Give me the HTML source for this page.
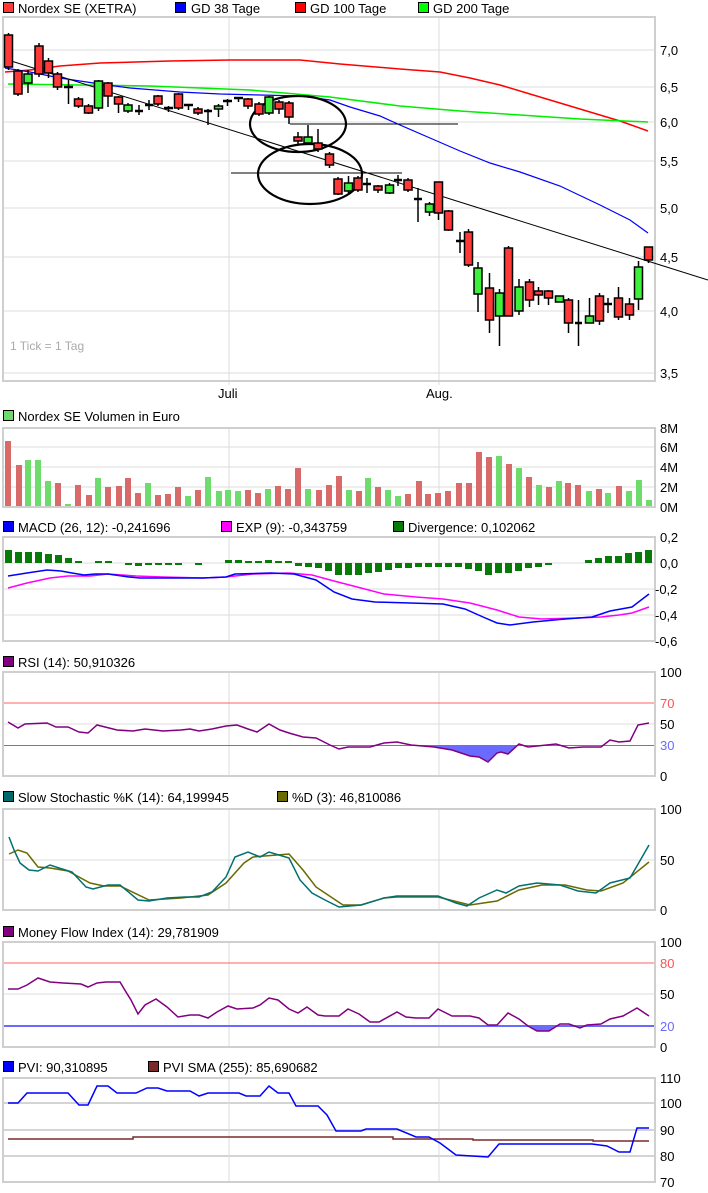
<!DOCTYPE html>
<html><head><meta charset="utf-8"><style>
html,body{margin:0;padding:0;background:#fff;}
svg{display:block;font-family:"Liberation Sans",sans-serif;}
text{font-size:13px;fill:#000;}
.g{stroke:#dcdcdc;stroke-width:1;fill:none}
.f{stroke:#cfcfcf;stroke-width:2;fill:none}
.r{fill:#ff3838;stroke:#000;stroke-width:1.5}
.gr{fill:#3cf03c;stroke:#000;stroke-width:1.5}
.w{stroke:#000;stroke-width:1.5}
.vr{fill:#d96a6a}
.vg{fill:#6ddc6d}
.d{fill:#087a08}
</style></head><body>
<svg width="708" height="1193" viewBox="0 0 708 1193" xmlns="http://www.w3.org/2000/svg">
<!-- MAIN LEGEND -->
<rect x="3.5" y="2.5" width="10" height="10" fill="#ff3838" stroke="#000"/><text x="18" y="13">Nordex SE (XETRA)</text>
<rect x="175.5" y="2.5" width="10" height="10" fill="#0000ff" stroke="#000"/><text x="191" y="13">GD 38 Tage</text>
<rect x="295.5" y="2.5" width="10" height="10" fill="#ff0000" stroke="#000"/><text x="310" y="13">GD 100 Tage</text>
<rect x="418.5" y="2.5" width="10" height="10" fill="#00ff00" stroke="#000"/><text x="433" y="13">GD 200 Tage</text>
<!-- MAIN FRAME -->
<g class="g"><line x1="4" y1="50" x2="655" y2="50"/><line x1="4" y1="87" x2="655" y2="87"/><line x1="4" y1="122" x2="655" y2="122"/><line x1="4" y1="161" x2="655" y2="161"/><line x1="4" y1="208" x2="655" y2="208"/><line x1="4" y1="257" x2="655" y2="257"/><line x1="4" y1="311" x2="655" y2="311"/><line x1="4" y1="373" x2="655" y2="373"/>
<line x1="229" y1="17" x2="229" y2="385"/><line x1="439" y1="17" x2="439" y2="385"/></g>
<rect class="f" x="3" y="17" width="652" height="364"/>
<text x="660" y="55">7,0</text><text x="660" y="92">6,5</text><text x="660" y="127">6,0</text><text x="660" y="166">5,5</text><text x="660" y="213">5,0</text><text x="660" y="262">4,5</text><text x="660" y="316">4,0</text><text x="660" y="378">3,5</text>
<text x="218" y="398">Juli</text><text x="426" y="398">Aug.</text>
<text x="10" y="350" style="fill:#aaa;font-size:12px">1 Tick = 1 Tag</text>
<!-- MAs -->
<polyline fill="none" stroke="#ff0000" stroke-width="1.5" points="5,72 30,70 60,66 100,63 170,61 230,60 300,60 340,64 400,69 440,72 470,78 500,85 530,94 560,103 590,112 620,121 648,131"/>
<polyline fill="none" stroke="#00ee00" stroke-width="1.5" points="8,84 80,85 150,86 250,90 330,97 400,106 460,111 520,115 580,119 648,122"/>
<polyline fill="none" stroke="#0000ff" stroke-width="1.2" points="5,68 30,72 60,78 100,84 130,88 180,92 220,94 260,95 300,96 330,100 350,107 380,116 400,125 430,138 460,151 490,163 520,172 560,186 600,205 630,220 648,233"/>
<!-- trend lines -->
<line x1="8" y1="60" x2="708" y2="280" stroke="#000" stroke-width="1"/>
<line x1="290" y1="124" x2="458" y2="124" stroke="#000" stroke-width="1"/>
<line x1="231" y1="173" x2="402" y2="173" stroke="#000" stroke-width="1"/>
<ellipse cx="298" cy="124" rx="48" ry="28" fill="none" stroke="#000" stroke-width="2.2"/>
<ellipse cx="310" cy="174" rx="52" ry="30" fill="none" stroke="#000" stroke-width="2.2"/>
<!-- CANDLES -->
<g class="w">
<line x1="8.5" y1="33" x2="8.5" y2="70"/><line x1="18" y1="69" x2="18" y2="96"/><line x1="28" y1="70" x2="28" y2="93"/><line x1="39" y1="43" x2="39" y2="77"/><line x1="48.5" y1="58" x2="48.5" y2="78"/><line x1="57.5" y1="72" x2="57.5" y2="90"/><line x1="68.5" y1="80" x2="68.5" y2="104"/><line x1="78.5" y1="97" x2="78.5" y2="108"/><line x1="88.5" y1="104" x2="88.5" y2="114"/><line x1="98.5" y1="80" x2="98.5" y2="111"/><line x1="108" y1="82" x2="108" y2="107"/><line x1="118.5" y1="96" x2="118.5" y2="113"/><line x1="128" y1="103" x2="128" y2="113"/><line x1="139" y1="105" x2="139" y2="115"/><line x1="149" y1="100" x2="149" y2="110"/><line x1="158" y1="95" x2="158" y2="106"/><line x1="168.5" y1="106" x2="168.5" y2="112"/><line x1="178.5" y1="93" x2="178.5" y2="110"/><line x1="188.5" y1="104" x2="188.5" y2="110"/><line x1="198" y1="107" x2="198" y2="115"/><line x1="208" y1="109" x2="208" y2="125"/><line x1="218.5" y1="104" x2="218.5" y2="117"/><line x1="227.5" y1="99" x2="227.5" y2="106"/><line x1="238.5" y1="97" x2="238.5" y2="102"/><line x1="248" y1="98" x2="248" y2="109"/><line x1="259" y1="102" x2="259" y2="116"/><line x1="269" y1="96" x2="269" y2="115"/><line x1="279" y1="100" x2="279" y2="114"/><line x1="289" y1="101" x2="289" y2="124"/><line x1="298" y1="132" x2="298" y2="145"/><line x1="308" y1="125" x2="308" y2="145"/><line x1="318" y1="129" x2="318" y2="152"/><line x1="329.5" y1="152" x2="329.5" y2="168"/><line x1="338" y1="177" x2="338" y2="195"/><line x1="348.5" y1="176" x2="348.5" y2="194"/><line x1="358" y1="176" x2="358" y2="192"/><line x1="367" y1="178" x2="367" y2="193"/><line x1="378" y1="185" x2="378" y2="193"/><line x1="389.5" y1="183" x2="389.5" y2="194"/><line x1="398" y1="175" x2="398" y2="186"/><line x1="408" y1="178" x2="408" y2="192"/><line x1="418" y1="188" x2="418" y2="222"/><line x1="429.5" y1="202" x2="429.5" y2="216"/><line x1="438.5" y1="182" x2="438.5" y2="220"/><line x1="448.5" y1="210" x2="448.5" y2="231"/><line x1="460" y1="232" x2="460" y2="253"/><line x1="468.5" y1="229" x2="468.5" y2="267"/><line x1="478" y1="262" x2="478" y2="312"/><line x1="489.5" y1="273" x2="489.5" y2="333"/><line x1="499.5" y1="289" x2="499.5" y2="346"/><line x1="508.5" y1="246" x2="508.5" y2="316"/><line x1="519" y1="279" x2="519" y2="315"/><line x1="529.5" y1="279" x2="529.5" y2="307"/><line x1="538.5" y1="287" x2="538.5" y2="305"/><line x1="548.5" y1="290" x2="548.5" y2="305"/><line x1="559.5" y1="296" x2="559.5" y2="302"/><line x1="568.5" y1="298" x2="568.5" y2="333"/><line x1="578.5" y1="300" x2="578.5" y2="346"/><line x1="589.5" y1="298" x2="589.5" y2="323"/><line x1="599.5" y1="293" x2="599.5" y2="325"/><line x1="608" y1="298" x2="608" y2="313"/><line x1="618.5" y1="287" x2="618.5" y2="320"/><line x1="629.5" y1="298" x2="629.5" y2="320"/><line x1="638.5" y1="261" x2="638.5" y2="310"/><line x1="648.5" y1="247" x2="648.5" y2="263"/>
</g>
<g stroke="#000" stroke-width="2.5">
<line x1="64" y1="87" x2="73" y2="87"/><line x1="135" y1="111" x2="143" y2="111"/><line x1="145" y1="105" x2="153" y2="105"/><line x1="164" y1="108" x2="173" y2="108"/><line x1="184" y1="105" x2="193" y2="105"/><line x1="204" y1="111" x2="212" y2="111"/><line x1="223" y1="101" x2="232" y2="101"/><line x1="234" y1="98" x2="243" y2="98"/><line x1="363" y1="184" x2="371" y2="184"/><line x1="394" y1="180" x2="402" y2="180"/><line x1="414" y1="199" x2="422" y2="199"/><line x1="456" y1="241" x2="464" y2="241"/><line x1="575" y1="323" x2="582" y2="323"/><line x1="604" y1="304" x2="612" y2="304"/>
</g>
<g>
<rect class="r" x="4.5" y="35" width="8" height="32"/><rect class="r" x="14" y="71" width="8" height="23"/><rect class="gr" x="24" y="74" width="8" height="9"/><rect class="r" x="35" y="46" width="8" height="28"/><rect class="r" x="44.5" y="61" width="8" height="12"/><rect class="r" x="53.5" y="74" width="8" height="13"/><rect class="r" x="74.5" y="99" width="8" height="7"/><rect class="r" x="84.5" y="106" width="8" height="7"/><rect class="gr" x="94.5" y="81" width="8" height="27"/><rect class="r" x="104" y="83" width="8" height="13"/><rect class="r" x="114.5" y="97" width="8" height="7"/><rect class="gr" x="124" y="105" width="8" height="6"/><rect class="r" x="154" y="96" width="8" height="8"/><rect class="r" x="174.5" y="94" width="8" height="14"/><rect class="r" x="194" y="109" width="8" height="4"/><rect class="gr" x="214.5" y="106" width="8" height="3"/><rect class="r" x="244" y="99" width="8" height="7"/><rect class="r" x="255" y="104" width="8" height="10"/><rect class="gr" x="265" y="97" width="8" height="16"/><rect class="r" x="275" y="102" width="8" height="7"/><rect class="r" x="285" y="103" width="8" height="14"/><rect class="r" x="294" y="137" width="8" height="4"/><rect class="gr" x="304" y="137" width="8" height="6"/><rect class="r" x="314" y="143" width="8" height="6"/><rect class="r" x="325.5" y="154" width="8" height="11"/><rect class="r" x="334" y="179" width="8" height="15"/><rect class="gr" x="344.5" y="183" width="8" height="8"/><rect class="r" x="354" y="178" width="8" height="12"/><rect class="r" x="374" y="186" width="8" height="4"/><rect class="gr" x="385.5" y="185" width="8" height="8"/><rect class="r" x="404" y="180" width="8" height="10"/><rect class="gr" x="425.5" y="204" width="8" height="8"/><rect class="r" x="434.5" y="182" width="8" height="31"/><rect class="r" x="444.5" y="211" width="8" height="19"/><rect class="r" x="464.5" y="232" width="8" height="33"/><rect class="gr" x="474" y="268" width="8" height="26"/><rect class="r" x="485.5" y="288" width="8" height="32"/><rect class="gr" x="495.5" y="293" width="8" height="23"/><rect class="r" x="504.5" y="248" width="8" height="68"/><rect class="gr" x="515" y="287" width="8" height="24"/><rect class="r" x="525.5" y="282" width="8" height="18"/><rect class="r" x="534.5" y="291" width="8" height="4"/><rect class="r" x="544.5" y="291" width="8" height="7"/><rect class="gr" x="555.5" y="296" width="8" height="6"/><rect class="r" x="564.5" y="300" width="8" height="23"/><rect class="gr" x="585.5" y="316" width="8" height="7"/><rect class="r" x="595.5" y="296" width="8" height="25"/><rect class="r" x="614.5" y="298" width="8" height="19"/><rect class="r" x="625.5" y="304" width="8" height="11"/><rect class="gr" x="634.5" y="267" width="8" height="32"/><rect class="r" x="644.5" y="247" width="8" height="13"/>
</g>

<!-- VOLUME -->
<rect x="3.5" y="410.5" width="10" height="10" fill="#6ddc6d" stroke="#000"/><text x="18" y="421">Nordex SE Volumen in Euro</text>
<g class="g"><line x1="4" y1="447" x2="655" y2="447"/><line x1="4" y1="467" x2="655" y2="467"/><line x1="4" y1="487" x2="655" y2="487"/><line x1="229" y1="428" x2="229" y2="507"/><line x1="439" y1="428" x2="439" y2="507"/></g>
<rect class="f" x="3" y="428" width="652" height="79"/>
<text x="660" y="433">8M</text><text x="660" y="452">6M</text><text x="660" y="472">4M</text><text x="660" y="492">2M</text><text x="660" y="512">0M</text>
<g>
<rect class="vr" x="5" y="441" width="6" height="65"/><rect class="vr" x="16" y="465" width="6" height="41"/><rect class="vg" x="25" y="460" width="6" height="46"/><rect class="vg" x="35" y="460" width="6" height="46"/><rect class="vg" x="45" y="481" width="6" height="25"/><rect class="vr" x="55" y="483" width="6" height="23"/><rect class="vg" x="65" y="504" width="6" height="2"/><rect class="vr" x="75" y="485" width="6" height="21"/><rect class="vr" x="86" y="495" width="6" height="11"/><rect class="vg" x="95" y="478" width="6" height="28"/><rect class="vr" x="105" y="487" width="6" height="19"/><rect class="vr" x="116" y="486" width="6" height="20"/><rect class="vr" x="125" y="478" width="6" height="28"/><rect class="vr" x="135" y="493" width="6" height="13"/><rect class="vg" x="145" y="483" width="6" height="23"/><rect class="vr" x="155" y="495" width="6" height="11"/><rect class="vr" x="165" y="494" width="6" height="12"/><rect class="vr" x="175" y="487" width="6" height="19"/><rect class="vg" x="185" y="496" width="6" height="10"/><rect class="vr" x="195" y="490" width="6" height="16"/><rect class="vg" x="205" y="477" width="6" height="29"/><rect class="vg" x="216" y="491" width="6" height="15"/><rect class="vg" x="225" y="490" width="6" height="16"/><rect class="vg" x="235" y="491" width="6" height="15"/><rect class="vr" x="245" y="490" width="6" height="16"/><rect class="vr" x="255" y="493" width="6" height="13"/><rect class="vg" x="265" y="489" width="6" height="17"/><rect class="vr" x="275" y="486" width="6" height="20"/><rect class="vr" x="285" y="489" width="6" height="17"/><rect class="vr" x="295" y="468" width="6" height="38"/><rect class="vg" x="305" y="489" width="6" height="17"/><rect class="vr" x="316" y="490" width="6" height="16"/><rect class="vr" x="326" y="485" width="6" height="21"/><rect class="vr" x="336" y="476" width="6" height="30"/><rect class="vg" x="346" y="490" width="6" height="16"/><rect class="vr" x="356" y="491" width="6" height="15"/><rect class="vg" x="365" y="478" width="6" height="28"/><rect class="vr" x="375" y="487" width="6" height="19"/><rect class="vg" x="385" y="490" width="6" height="16"/><rect class="vg" x="395" y="496" width="6" height="10"/><rect class="vr" x="405" y="494" width="6" height="12"/><rect class="vr" x="416" y="481" width="6" height="25"/><rect class="vr" x="425" y="494" width="6" height="12"/><rect class="vr" x="435" y="493" width="6" height="13"/><rect class="vr" x="445" y="491" width="6" height="15"/><rect class="vr" x="456" y="483" width="6" height="23"/><rect class="vr" x="466" y="483" width="6" height="23"/><rect class="vr" x="476" y="452" width="6" height="54"/><rect class="vr" x="486" y="457" width="6" height="49"/><rect class="vg" x="496" y="456" width="6" height="50"/><rect class="vr" x="506" y="464" width="6" height="42"/><rect class="vg" x="516" y="468" width="6" height="38"/><rect class="vr" x="526" y="477" width="6" height="29"/><rect class="vg" x="536" y="485" width="6" height="21"/><rect class="vr" x="546" y="487" width="6" height="19"/><rect class="vg" x="556" y="481" width="6" height="25"/><rect class="vr" x="565" y="483" width="6" height="23"/><rect class="vr" x="575" y="485" width="6" height="21"/><rect class="vg" x="586" y="491" width="6" height="15"/><rect class="vr" x="596" y="489" width="6" height="17"/><rect class="vg" x="605" y="493" width="6" height="13"/><rect class="vr" x="616" y="486" width="6" height="20"/><rect class="vg" x="626" y="491" width="6" height="15"/><rect class="vg" x="636" y="480" width="6" height="26"/><rect class="vg" x="646" y="500" width="6" height="6"/>
</g>

<!-- MACD -->
<rect x="3.5" y="521.5" width="10" height="10" fill="#0000ff" stroke="#000"/><text x="18" y="532">MACD (26, 12): -0,241696</text>
<rect x="221.5" y="521.5" width="10" height="10" fill="#ff00ff" stroke="#000"/><text x="236" y="532">EXP (9): -0,343759</text>
<rect x="393.5" y="521.5" width="10" height="10" fill="#087a08" stroke="#000"/><text x="408" y="532">Divergence: 0,102062</text>
<g class="g"><line x1="4" y1="563" x2="655" y2="563"/><line x1="4" y1="589" x2="655" y2="589"/><line x1="4" y1="615" x2="655" y2="615"/><line x1="229" y1="537" x2="229" y2="641"/><line x1="439" y1="537" x2="439" y2="641"/></g>
<rect class="f" x="3" y="537" width="652" height="104"/>
<text x="660" y="542">0,2</text><text x="660" y="568">0,0</text><text x="655" y="594">-0,2</text><text x="655" y="620">-0,4</text><text x="655" y="646">-0,6</text>
<g class="d">
<rect x="5" y="550" width="7" height="13"/><rect x="15" y="552" width="7" height="11"/><rect x="25" y="552" width="7" height="11"/><rect x="35" y="552" width="7" height="11"/><rect x="45" y="554" width="7" height="9"/><rect x="55" y="555" width="7" height="8"/><rect x="65" y="558" width="7" height="5"/><rect x="75" y="561" width="7" height="2"/><rect x="95" y="561" width="7" height="2"/><rect x="105" y="561" width="7" height="2"/><rect x="125" y="563" width="7" height="2"/><rect x="135" y="563" width="7" height="3"/><rect x="145" y="563" width="7" height="2"/><rect x="155" y="563" width="7" height="2"/><rect x="165" y="563" width="7" height="2"/><rect x="175" y="563" width="7" height="2"/><rect x="195" y="563" width="7" height="2"/><rect x="225" y="560" width="7" height="3"/><rect x="235" y="560" width="7" height="3"/><rect x="245" y="561" width="7" height="2"/><rect x="255" y="561" width="7" height="2"/><rect x="265" y="560" width="7" height="3"/><rect x="275" y="561" width="7" height="2"/><rect x="285" y="561" width="7" height="2"/><rect x="295" y="563" width="7" height="3"/><rect x="305" y="563" width="7" height="4"/><rect x="315" y="563" width="7" height="5"/><rect x="325" y="563" width="7" height="8"/><rect x="335" y="563" width="7" height="12"/><rect x="345" y="563" width="7" height="12"/><rect x="355" y="563" width="7" height="12"/><rect x="365" y="563" width="7" height="10"/><rect x="375" y="563" width="7" height="9"/><rect x="385" y="563" width="7" height="7"/><rect x="395" y="563" width="7" height="5"/><rect x="405" y="563" width="7" height="5"/><rect x="415" y="563" width="7" height="4"/><rect x="425" y="563" width="7" height="4"/><rect x="435" y="563" width="7" height="4"/><rect x="445" y="563" width="7" height="4"/><rect x="455" y="563" width="7" height="4"/><rect x="465" y="563" width="7" height="6"/><rect x="475" y="563" width="7" height="8"/><rect x="485" y="563" width="7" height="8"/><rect x="485" y="563" width="7" height="12"/><rect x="495" y="563" width="7" height="10"/><rect x="505" y="563" width="7" height="10"/><rect x="515" y="563" width="7" height="8"/><rect x="525" y="563" width="7" height="5"/><rect x="535" y="563" width="7" height="4"/><rect x="545" y="563" width="7" height="2"/><rect x="585" y="560" width="7" height="3"/><rect x="595" y="558" width="7" height="5"/><rect x="605" y="556" width="7" height="7"/><rect x="615" y="556" width="7" height="7"/><rect x="625" y="553" width="7" height="10"/><rect x="635" y="552" width="7" height="11"/><rect x="645" y="550" width="7" height="13"/>
</g>
<polyline fill="none" stroke="#ff00ff" stroke-width="1.5" points="8,588 27,583 50,578 68,576 90,576 108,574 136,576 163,577 203,578 226,577 253,574 289,573 312,575 334,581 361,588 384,594 416,597 443,599 470,603 497,610 519,617 542,619 578,618 601,617 619,615 632,613 649,607"/>
<polyline fill="none" stroke="#0000ff" stroke-width="1.5" points="8,576 27,573 47,570 61,571 72,573 84,575 95,574 108,574 129,577 140,578 158,578 181,578 203,578 226,577 235,574 271,573 294,574 316,580 334,592 352,599 375,602 443,604 465,609 483,617 497,623 510,625 533,622 565,619 592,617 610,611 632,607 649,594"/>

<!-- RSI -->
<rect x="3.5" y="656.5" width="10" height="10" fill="#800080" stroke="#000"/><text x="18" y="667">RSI (14): 50,910326</text>
<g class="g"><line x1="4" y1="724" x2="655" y2="724"/><line x1="229" y1="672" x2="229" y2="776"/><line x1="439" y1="672" x2="439" y2="776"/></g>
<line x1="4" y1="703" x2="655" y2="703" stroke="#ff6060" stroke-width="1"/>
<polygon fill="#6a6aff" points="420,746 434,747 452,750 470,756 479,757 488,762 497,753 501,752 508,754 516,746"/>
<line x1="4" y1="745.5" x2="655" y2="745.5" stroke="#6a6aff" stroke-width="1"/>
<rect class="f" x="3" y="672" width="652" height="104"/>
<text x="660" y="677">100</text><text x="660" y="708" style="fill:#ff5050">70</text><text x="660" y="729">50</text><text x="660" y="750" style="fill:#6a6aff">30</text><text x="660" y="781">0</text>
<polyline fill="none" stroke="#800080" stroke-width="1.5" points="8,722 18,728 25,724 47,723 56,727 68,727 79,732 88,733 97,725 117,730 133,731 145,729 163,731 181,730 190,729 199,731 212,729 226,726 237,725 248,729 257,732 269,724 280,730 289,733 303,737 316,738 330,745 339,749 348,747 370,747 384,743 397,742 411,745 434,747 452,750 470,756 479,757 488,762 497,753 501,752 508,754 519,744 528,747 556,744 569,748 583,747 601,747 610,740 619,742 630,741 638,725 649,723"/>

<!-- STOCH -->
<rect x="3.5" y="791.5" width="10" height="10" fill="#006a6a" stroke="#000"/><text x="18" y="802">Slow Stochastic %K (14): 64,199945</text>
<rect x="277.5" y="791.5" width="10" height="10" fill="#6a6a00" stroke="#000"/><text x="292" y="802">%D (3): 46,810086</text>
<g class="g"><line x1="4" y1="860" x2="655" y2="860"/><line x1="229" y1="809" x2="229" y2="910"/><line x1="439" y1="809" x2="439" y2="910"/></g>
<rect class="f" x="3" y="809" width="652" height="101"/>
<text x="660" y="814">100</text><text x="660" y="865">50</text><text x="660" y="915">0</text>
<polyline fill="none" stroke="#6a6a00" stroke-width="1.5" points="9,854 18,850 27,853 38,867 50,868 68,871 90,883 104,886 120,886 149,900 181,898 208,895 226,883 244,863 253,857 289,854 303,870 316,887 343,905 361,905 384,898 397,897 438,897 470,905 497,901 519,890 542,885 565,885 587,890 601,891 623,883 649,862"/>
<polyline fill="none" stroke="#007070" stroke-width="1.5" points="9,837 14,850 20,863 29,870 38,871 50,865 59,868 72,872 86,887 93,889 108,885 120,885 138,900 149,901 167,898 185,897 199,897 212,892 226,877 235,857 248,852 260,857 269,852 289,858 300,880 312,893 325,900 339,907 361,905 384,898 397,896 438,896 456,903 467,906 479,898 497,890 506,893 519,886 537,883 560,885 578,891 596,893 610,883 630,878 649,845"/>

<!-- MFI -->
<rect x="3.5" y="926.5" width="10" height="10" fill="#800080" stroke="#000"/><text x="18" y="937">Money Flow Index (14): 29,781909</text>
<g class="g"><line x1="4" y1="994" x2="655" y2="994"/><line x1="229" y1="942" x2="229" y2="1047"/><line x1="439" y1="942" x2="439" y2="1047"/></g>
<line x1="4" y1="963" x2="655" y2="963" stroke="#ff6060" stroke-width="1"/>
<polygon fill="#6a6aff" points="522,1026 528,1026 537,1031 549,1031 556,1026"/>
<line x1="4" y1="1026" x2="655" y2="1026" stroke="#6a6aff" stroke-width="2"/>
<rect class="f" x="3" y="942" width="652" height="105"/>
<text x="660" y="947">100</text><text x="660" y="968" style="fill:#ff5050">80</text><text x="660" y="999">50</text><text x="660" y="1031" style="fill:#6a6aff">20</text><text x="660" y="1052">0</text>
<polyline fill="none" stroke="#800080" stroke-width="1.5" points="8,989 18,989 27,985 38,978 50,982 63,983 81,984 88,987 97,983 106,982 120,982 126,992 131,1000 138,1014 145,1005 156,999 167,1007 178,1017 190,1015 199,1015 208,1018 217,1012 228,1006 237,1009 253,1008 260,1005 269,998 278,1000 289,1009 298,1013 307,1007 318,1015 325,1016 339,1016 348,1009 359,1014 370,1022 379,1022 397,1012 406,1017 416,1018 429,1018 438,1009 452,1016 470,1016 479,1018 488,1025 497,1025 508,1013 519,1019 528,1026 537,1031 549,1031 560,1024 569,1024 580,1028 587,1025 601,1024 610,1019 623,1016 637,1008 649,1016"/>

<!-- PVI -->
<rect x="3.5" y="1061.5" width="10" height="10" fill="#0000ff" stroke="#000"/><text x="18" y="1072">PVI: 90,310895</text>
<rect x="148.5" y="1061.5" width="10" height="10" fill="#7a2a2a" stroke="#000"/><text x="163" y="1072">PVI SMA (255): 85,690682</text>
<g class="g" style="stroke:#d4d4d4;stroke-width:2"><line x1="4" y1="1103" x2="655" y2="1103"/><line x1="4" y1="1130" x2="655" y2="1130"/><line x1="4" y1="1156" x2="655" y2="1156"/></g>
<g class="g"><line x1="229" y1="1078" x2="229" y2="1182"/><line x1="439" y1="1078" x2="439" y2="1182"/></g>
<rect class="f" x="3" y="1078" width="652" height="104"/>
<text x="660" y="1083">110</text><text x="660" y="1108">100</text><text x="660" y="1135">90</text><text x="660" y="1161">80</text><text x="660" y="1187">70</text>
<polyline fill="none" stroke="#7a2a2a" stroke-width="1.5" points="8,1139 133,1139 133,1137 393,1137 393,1139 473,1139 473,1140 593,1140 593,1141 649,1141"/>
<polyline fill="none" stroke="#0000ff" stroke-width="1.5" points="8,1103 18,1103 27,1093 68,1093 79,1105 88,1105 97,1086 108,1086 117,1093 136,1093 147,1088 158,1088 167,1091 190,1091 199,1096 208,1093 226,1093 239,1093 246,1096 260,1096 269,1086 278,1093 289,1093 296,1106 318,1106 327,1115 336,1131 361,1131 366,1129 397,1129 416,1137 429,1137 440,1143 456,1155 472,1156 488,1157 499,1144 592,1144 607,1146 619,1152 630,1152 637,1128 649,1128"/>
</svg>
</body></html>
